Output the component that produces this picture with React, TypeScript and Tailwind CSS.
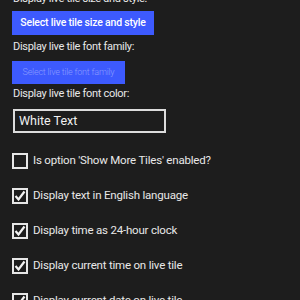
const font = { fontFamily: 'Roboto, "Open Sans", sans-serif' }

function Check({ checked, label }: { checked: boolean; label: string }) {
  return (
    <div className="flex items-center h-[16px] gap-[5px]">
      <div className="w-[16px] h-[16px] border-2 border-[#e6e6e6] flex items-center justify-center shrink-0">
        {checked && (
          <svg width="12" height="12" viewBox="0 0 12 12">
            <polyline points="1.5,6 4.5,9.5 10.5,1.5" fill="none" stroke="#f2f2f2" strokeWidth="2.2" />
          </svg>
        )}
      </div>
      <span className="text-[11.5px] tracking-[-0.2px] text-[#e8e8e8] whitespace-nowrap">{label}</span>
    </div>
  )
}

export default function App() {
  return (
    <div className="w-[300px] h-[300px] overflow-hidden bg-[#1d1d1d]" style={font}>
      <div className="px-3 -mt-[10px] flex flex-col">
        <div className="h-[18px] leading-[18px] text-[11px] tracking-[-0.3px] text-[#e8e8e8] pl-px">Display live tile size and style:</div>
        <div className="mt-[3px] w-[142px] h-[24px] bg-[#3d5afe] flex items-center justify-center text-[10.5px] tracking-[-0.2px] font-medium text-white whitespace-nowrap">
          Select live tile size and style
        </div>
        <div className="mt-[3px] h-[18px] leading-[18px] text-[11px] tracking-[-0.3px] text-[#e8e8e8] pl-px">Display live tile font family:</div>
        <div className="mt-[5px] w-[113px] h-[23px] bg-[#3d5afe] flex items-center justify-center text-[9px] tracking-[-0.2px] font-light text-[#8a9bff] whitespace-nowrap">
          Select live tile font family
        </div>
        <div className="mt-[1px] h-[18px] leading-[18px] text-[11px] tracking-[-0.3px] text-[#e8e8e8] pl-px">Display live tile font color:</div>
        <div className="mt-[6px] ml-px w-[153px] h-[24px] border-2 border-[#dcdcdc] flex items-center pl-[4px] text-[12.5px] text-[#f0f0f0]">
          White Text
        </div>
        <div className="mt-[20px] flex flex-col gap-[19px]">
          <Check checked={false} label="Is option 'Show More Tiles' enabled?" />
          <Check checked label="Display text in English language" />
          <Check checked label="Display time as 24-hour clock" />
          <Check checked label="Display current time on live tile" />
          <Check checked label="Display current date on live tile" />
        </div>
      </div>
    </div>
  )
}
